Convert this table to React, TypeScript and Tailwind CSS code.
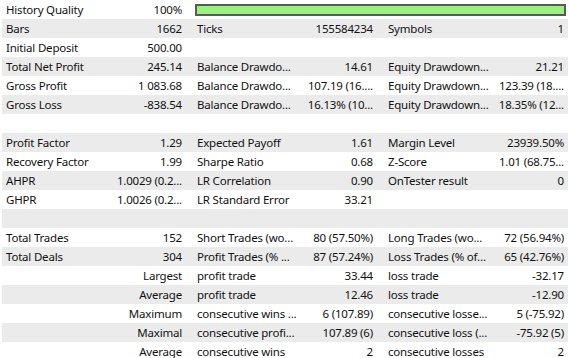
import React from "react";

type Cell = [string, string];
type Row = [Cell, Cell, Cell];

const E: Cell = ["", ""];

const rows: Row[] = [
  [["Bars", "1662"], ["Ticks", "155584234"], ["Symbols", "1"]],
  [["Initial Deposit", "500.00"], E, E],
  [["Total Net Profit", "245.14"], ["Balance Drawdo...", "14.61"], ["Equity Drawdown...", "21.21"]],
  [["Gross Profit", "1 083.68"], ["Balance Drawdo...", "107.19 (16...."], ["Equity Drawdown...", "123.39 (18...."]],
  [["Gross Loss", "-838.54"], ["Balance Drawdo...", "16.13% (10..."], ["Equity Drawdown...", "18.35% (12..."]],
  [E, E, E],
  [["Profit Factor", "1.29"], ["Expected Payoff", "1.61"], ["Margin Level", "23939.50%"]],
  [["Recovery Factor", "1.99"], ["Sharpe Ratio", "0.68"], ["Z-Score", "1.01 (68.75..."]],
  [["AHPR", "1.0029 (0.2..."], ["LR Correlation", "0.90"], ["OnTester result", "0"]],
  [["GHPR", "1.0026 (0.2..."], ["LR Standard Error", "33.21"], E],
  [E, E, E],
  [["Total Trades", "152"], ["Short Trades (wo...", "80 (57.50%)"], ["Long Trades (wo...", "72 (56.94%)"]],
  [["Total Deals", "304"], ["Profit Trades (% ...", "87 (57.24%)"], ["Loss Trades (% of...", "65 (42.76%)"]],
  [["", "Largest"], ["profit trade", "33.44"], ["loss trade", "-32.17"]],
  [["", "Average"], ["profit trade", "12.46"], ["loss trade", "-12.90"]],
  [["", "Maximum"], ["consecutive wins ...", "6 (107.89)"], ["consecutive losse...", "5 (-75.92)"]],
  [["", "Maximal"], ["consecutive profi...", "107.89 (6)"], ["consecutive loss (...", "-75.92 (5)"]],
  [["", "Average"], ["consecutive wins", "2"], ["consecutive losses", "2"]],
];

const App = () => {
  return (
    <div
      className="w-[569px] h-[358px] bg-white pl-[2px] pr-[1px] overflow-hidden text-[11.5px] tracking-[-0.2px] leading-[19px] text-[#111]"
      style={{ fontFamily: '"Segoe UI", "Noto Sans", "Open Sans", sans-serif' }}
    >
      <div className="w-[566px] overflow-hidden">
        {/* history quality row with the green bar */}
        <div className="grid grid-cols-[113px_78px_1fr] h-[19px] bg-white">
          <div className="pl-[4px] whitespace-nowrap overflow-hidden">History Quality</div>
          <div className="pr-[11px] text-right whitespace-nowrap overflow-hidden">100%</div>
          <div className="pl-[2px] pr-[2px] pt-[4px]">
            <div className="h-[12px] border-2 border-[#5a5a5a] bg-[#98f27e]" />
          </div>
        </div>

        {rows.map((row, i) => (
          <div
            key={i}
            className={`${
              i % 2 === 0 ? "bg-[#ebebeb]" : "bg-white"
            } grid grid-cols-[113px_78px_113px_78px_113px_78px] h-[19px] w-[573px]`}
          >
            {row.map(([label, value], j) => (
              <React.Fragment key={j}>
                <div className="pl-[4px] pr-[4px] whitespace-nowrap overflow-hidden">{label}</div>
                <div className="pr-[11px] text-right whitespace-nowrap overflow-hidden">{value}</div>
              </React.Fragment>
            ))}
          </div>
        ))}
      </div>
    </div>
  );
};

export default App;
